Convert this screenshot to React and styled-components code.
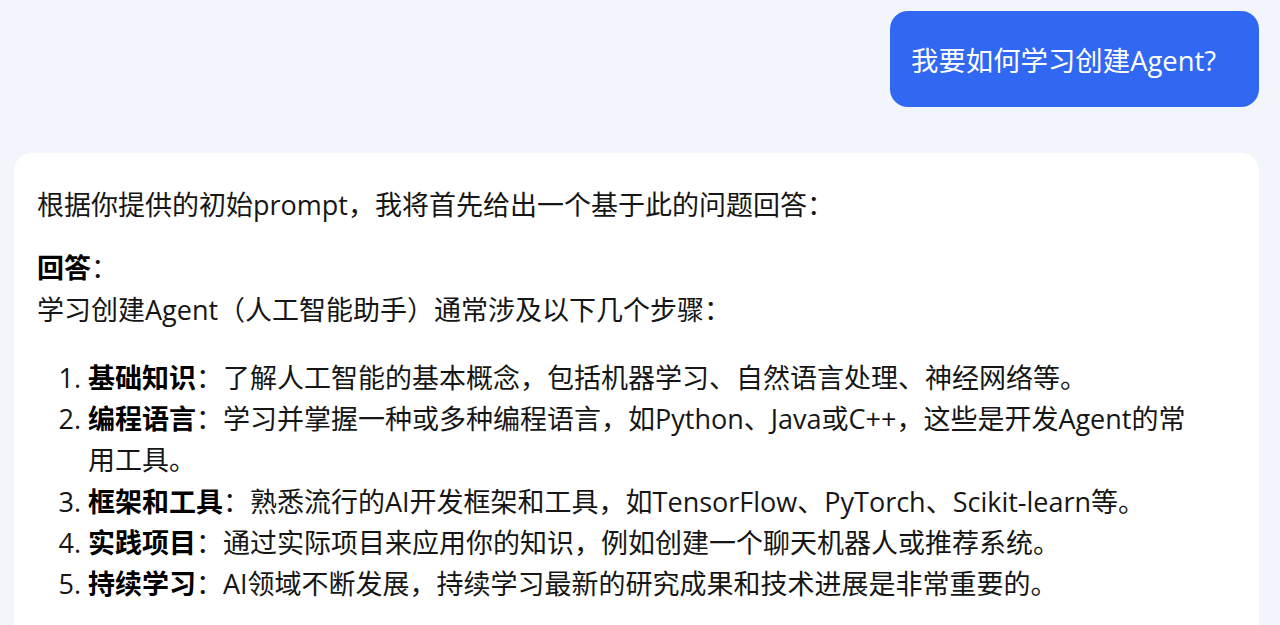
import React from 'react';
import styled, { createGlobalStyle } from 'styled-components';

const GlobalStyle = createGlobalStyle`
  html, body {
    margin: 0;
    padding: 0;
    background: #f2f5fb;
    font-family: "Open Sans", "Noto Sans CJK SC", sans-serif;
    overflow: hidden;
  }
`;

const Page = styled.div`
  display: flex;
  flex-direction: column;
  padding: 11px 21px 0 14px;
  height: 625px;
  box-sizing: border-box;
`;

const UserRow = styled.div`
  display: flex;
  justify-content: flex-end;
  margin-bottom: 46px;
`;

const UserBubble = styled.div`
  display: flex;
  align-items: center;
  height: 96px;
  width: 369px;
  box-sizing: border-box;
  padding: 0 21px;
  background: #3067f3;
  color: #fff;
  border-radius: 18px;
  font-size: 27.4px;
  white-space: nowrap;
`;

const AnswerCard = styled.div`
  flex: 1;
  background: #fff;
  border-radius: 18px 18px 0 0;
  padding: 31px 60px 0 23px;
  color: #161616;
  font-size: 27px;
  line-height: 41.3px;
`;

const Para = styled.p`
  margin: 0 0 ${p => p.$gap || 0}px;
`;

const Strong = styled.b`
  font-weight: 700;
  color: #000;
`;

const List = styled.ol`
  margin: 0;
  padding-left: 51px;
`;

const Item = styled.li`
  padding-left: 0;
`;

const items = [
  ['基础知识', '了解人工智能的基本概念，包括机器学习、自然语言处理、神经网络等。'],
  ['编程语言', '学习并掌握一种或多种编程语言，如Python、Java或C++，这些是开发Agent的常用工具。'],
  ['框架和工具', '熟悉流行的AI开发框架和工具，如TensorFlow、PyTorch、Scikit-learn等。'],
  ['实践项目', '通过实际项目来应用你的知识，例如创建一个聊天机器人或推荐系统。'],
  ['持续学习', 'AI领域不断发展，持续学习最新的研究成果和技术进展是非常重要的。'],
];

export default function App() {
  return (
    <>
      <GlobalStyle />
      <Page>
        <UserRow>
          <UserBubble>我要如何学习创建Agent?</UserBubble>
        </UserRow>
        <AnswerCard>
          <Para $gap={22}>根据你提供的初始prompt，我将首先给出一个基于此的问题回答：</Para>
          <Para $gap={27}>
            <Strong>回答</Strong>：<br />
            学习创建Agent（人工智能助手）通常涉及以下几个步骤：
          </Para>
          <List>
            {items.map(([title, text]) => (
              <Item key={title}>
                <Strong>{title}</Strong>：{text}
              </Item>
            ))}
          </List>
        </AnswerCard>
      </Page>
    </>
  );
}
